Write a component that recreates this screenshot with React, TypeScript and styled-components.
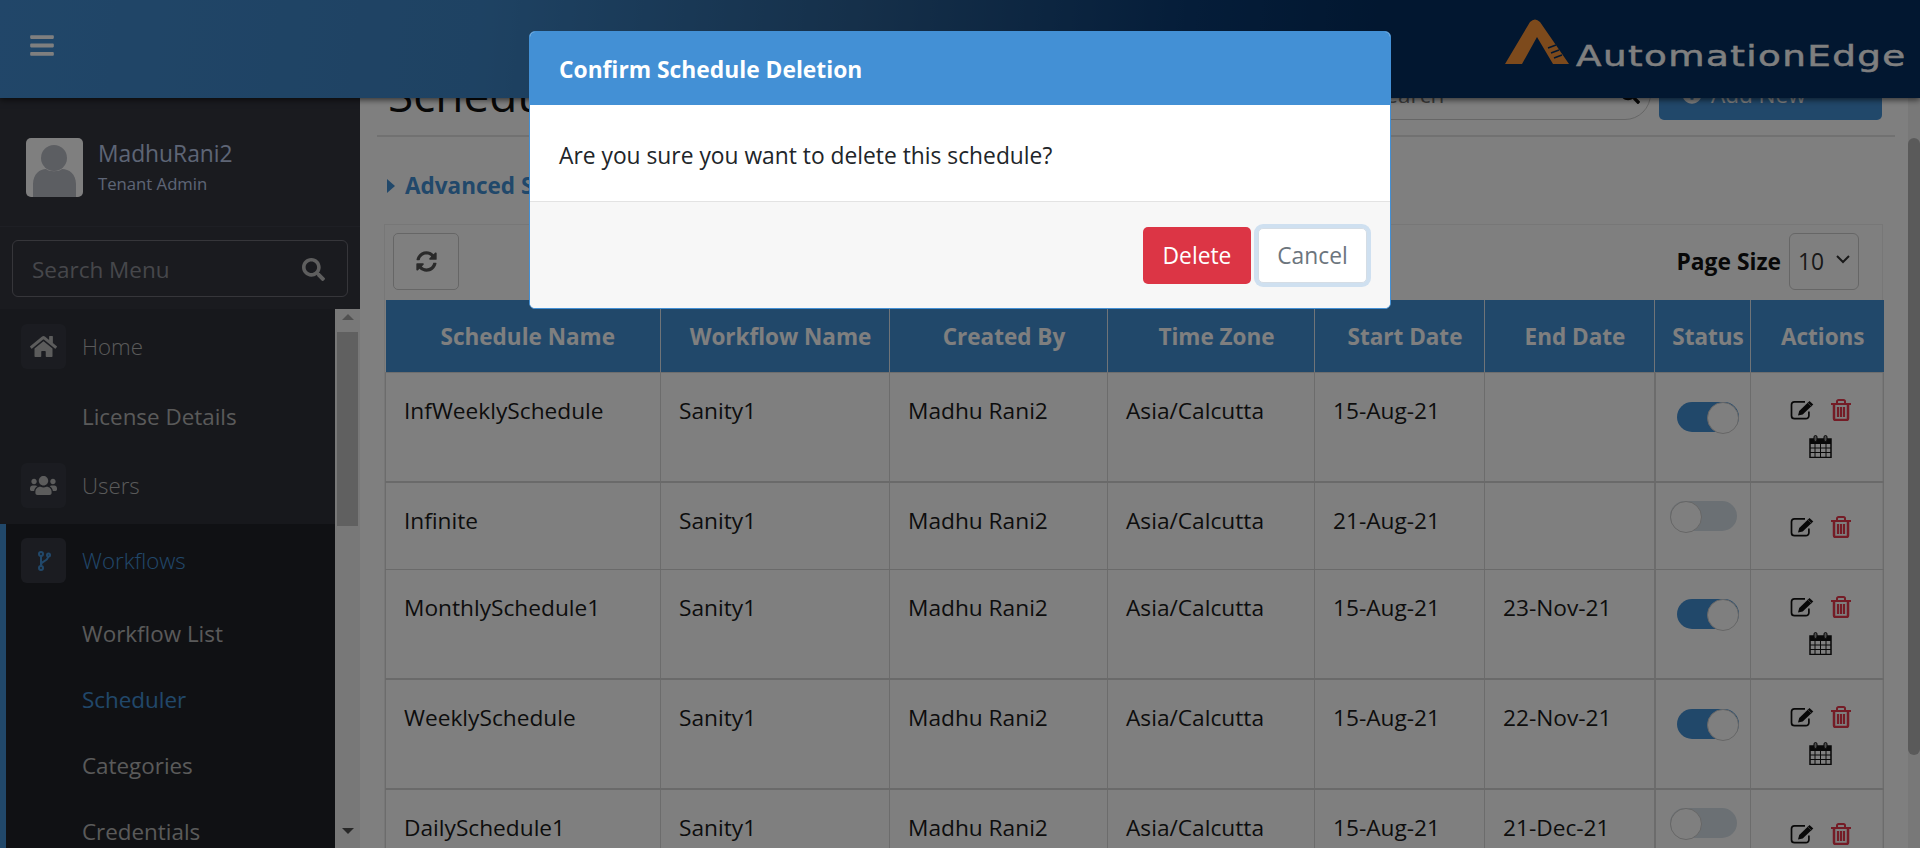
import React from "react";
import styled, { createGlobalStyle } from "styled-components";
import { FaBars, FaHome, FaUsers, FaSearch, FaSyncAlt, FaPlusCircle } from "react-icons/fa";

const Global = createGlobalStyle`
  html, body { margin: 0; padding: 0; height: 100%; overflow: hidden; background: #fff; }
  * { box-sizing: border-box; }
  body { font-family: "Open Sans", "Noto Sans", sans-serif; color: #212529; }
`;

const Page = styled.div`
  width: 1920px; height: 848px; display: flex; flex-direction: column; overflow: hidden; position: relative;
`;
const Header = styled.header`
  height: 98px; flex: none; display: flex; align-items: center; justify-content: space-between;
  padding: 0 19px 0 30px; position: relative; z-index: 2;
  background: linear-gradient(96deg, #428dd2 0%, #3d85c6 25%, #2a5f93 45%, #0a3a72 62%, #042e60 72%);
  box-shadow: 0 2px 6px rgba(0,0,0,.6);
`;
const Burger = styled.div`
  color: #fff; display: flex; margin-top: -7px; svg { width: 24px; height: 27px; display: block; }
`;
const Logo = styled.div`
  display: flex; align-items: flex-end; gap: 7px; margin-top: -16px;
`;
const LogoText = styled.span`
  display: inline-block; font-family: "DejaVu Sans", sans-serif; font-size: 29px; line-height: 32px; color: #fff; font-weight: 400;
  letter-spacing: 1.1px; margin: 0 68px -8px 0; -webkit-text-stroke: .5px #fff;
  transform: scaleX(1.285); transform-origin: left center;
`;
const Body = styled.div`
  flex: 1; display: flex; min-height: 0;
`;
const Sidebar = styled.aside`
  width: 360px; flex: none; background: #34363f; display: flex; flex-direction: column; overflow: hidden;
`;
const UserBox = styled.div`
  height: 129px; flex: none; border-bottom: 1px solid #3d3f49; display: flex; align-items: center; gap: 15px; padding: 10px 0 0 26px;
`;
const Avatar = styled.div`
  width: 57px; height: 59px; border-radius: 5px; background: #fff; overflow: hidden; flex: none;
  svg { display: block; width: 100%; height: 100%; }
`;
const UserText = styled.div`
  display: flex; flex-direction: column; gap: 5px;
`;
const UserName = styled.div`
  font-size: 22.8px; line-height: 28px; color: #bccbea;
`;
const UserRole = styled.div`
  font-size: 16.7px; line-height: 22px; color: #bccbea;
`;
const SearchMenu = styled.div`
  margin: 13px 12px 12px; height: 57px; flex: none; border: 1px solid #6c6c74; border-radius: 6px;
  display: flex; align-items: center; justify-content: space-between; padding: 2px 22px 0 19px;
  color: #8d8f96; font-size: 22.5px; svg { width: 23px; height: 23px; color: #bdbdbd; }
`;
const MenuWrap = styled.div`
  flex: 1; display: flex; min-height: 0;
`;
const Menu = styled.nav`
  width: 335px; flex: none; display: flex; flex-direction: column;
`;
const MenuGroup = styled.div`
  height: 215px; flex: none; padding-top: 15px; background: #2e3038;
`;
const Active = styled.div`
  flex: 1; border-left: 6px solid #4390d5; background: #212329; padding-top: 14px;
`;
const MenuItem = styled.div<{ $blue?: boolean }>`
  display: flex; align-items: center; gap: 16px; height: 45px; padding-left: 21px;
  font-size: 22.3px; font-weight: 300; color: ${p => (p.$blue ? "#4390d5" : "#b4b4b4")};
`;
const ActiveItem = styled(MenuItem)`
  padding-left: 15px; margin-bottom: 17px;
`;
const IconBox = styled.span<{ $blue?: boolean }>`
  width: 45px; height: 45px; border-radius: 6px; background: #363943; display: flex; align-items: center; justify-content: center;
  color: ${p => (p.$blue ? "#4390d5" : "#b8b8b8")}; flex: none; svg { width: 27px; height: 27px; }
`;
const BranchGlyph = styled.svg`
  && { width: 15px; height: 20px; }
`;
const SubItem = styled.div<{ $blue?: boolean; $h?: number }>`
  height: ${p => p.$h ?? 66}px; display: flex; align-items: center; padding-left: 76px; font-size: 22.4px;
  color: ${p => (p.$blue ? "#4390d5" : "#b4b4b4")};
`;
const PlainSub = styled(SubItem)`
  padding-left: 82px;
`;
const Track = styled.div`
  width: 25px; flex: none; background: #f1f1f1; display: flex; flex-direction: column; align-items: center; padding-top: 5px; position: relative;
`;
const Arrow = styled.span<{ $down?: boolean }>`
  width: 0; height: 0; border-left: 6px solid transparent; border-right: 6px solid transparent;
  ${p => (p.$down ? "border-top: 6px solid #505050;" : "border-bottom: 6px solid #a3a3a3;")}
`;
const Thumb = styled.div`
  width: 21px; height: 194px; background: #c1c1c1; margin: 12px 0 302px;
`;
const Main = styled.main`
  flex: 1; display: flex; min-width: 0;
`;
const Content = styled.div`
  width: 1548px; flex: none; padding: 0 13px 0 17px; overflow: hidden;
`;
const PageScroll = styled.div`
  width: 12px; flex: none; background: #f1f1f1; padding-top: 40px;
`;
const PageThumb = styled.div`
  height: 617px; background: #b4b4b4; border-radius: 6px;
`;
const TitleBar = styled.div`
  height: 39px; border-bottom: 2px solid #e3e3e3; display: flex; align-items: flex-end; overflow: hidden; padding: 0 13px 15px 11px; position: relative; width: 1518px;
`;
const Title = styled.h1`
  margin: 0 auto -5px 0; font-size: 46px; line-height: 62px; font-weight: 500; color: #111; white-space: nowrap;
`;
const TopSearch = styled.div`
  width: 400px; height: 52px; border: 1px solid #ccc; border-radius: 26px; display: flex; align-items: center; justify-content: space-between;
  padding: 0 10px 0 121px; font-size: 22.5px; color: #777; svg { width: 20px; height: 20px; color: #111; }
`;
const AddNew = styled.button`
  margin-left: 8px; width: 223px; height: 52px; border: 0; border-radius: 5px; background: #4390d5; color: #fff; font: 22.5px "Open Sans", sans-serif;
  display: flex; align-items: center; justify-content: flex-start; padding-left: 23px; gap: 9px; svg { width: 20px; height: 20px; }
`;
const Advanced = styled.div`
  height: 87px; display: flex; align-items: center; gap: 10px; padding: 10px 0 0 10px; font-size: 22.5px; font-weight: 700; color: #4390d5;
`;
const Caret = styled.span`
  width: 0; height: 0; border-top: 7px solid transparent; border-bottom: 7px solid transparent; border-left: 8px solid #4390d5;
`;
const TablePanel = styled.section`
  width: 1499px; margin-left: 7px; border: 1px solid #eee; border-bottom: 0;
`;
const Toolbar = styled.div`
  height: 75px; display: flex; align-items: flex-start; justify-content: space-between; padding: 8px 23px 0 8px;
`;
const RefreshBtn = styled.button`
  width: 66px; height: 57px; background: transparent; border: 1px solid #ccc; border-radius: 5px; color: #555;
  display: flex; align-items: center; justify-content: center; svg { width: 21px; height: 21px; }
`;
const PageSize = styled.div`
  display: flex; align-items: center; gap: 8px; font-size: 22.8px; font-weight: 700; color: #111;
`;
const SelectBox = styled.div`
  width: 70px; height: 57px; border: 1px solid #ccc; border-radius: 6px; display: flex; align-items: center; justify-content: space-between;
  padding: 0 7px 0 8px; font-size: 22.8px; font-weight: 400; color: #333; svg { width: 16px; height: 10px; margin-bottom: 6px; }
`;
const Table = styled.table`
  width: 1498px; border-collapse: collapse; table-layout: fixed; font-size: 22.7px;
`;
const Th = styled.th`
  height: 72px; background: #4390d5; color: #fff; font-weight: 700; font-size: 22.5px; text-align: center; padding: 2px 0 0 11px;
  border-left: 1px solid #e0e8f0; border-bottom: 1px solid #ddd; white-space: nowrap;
  &:first-child { border-left: 0; padding-left: 10px; }
`;
const Tr = styled.tr<{ $tall?: boolean }>`
  height: ${p => (p.$tall ? 110 : 87)}px;
  td { border-bottom: ${p => (p.$tall ? 2 : 1)}px solid #d4d4d4; }
`;
const Td = styled.td`
  padding: 23px 18px 0; vertical-align: top; border-left: 1px solid #d8d8d8; line-height: 30px; color: #1a1a1a; white-space: nowrap;
`;
const ToggleTd = styled.td<{ $on?: boolean }>`
  padding: 0 0 20px ${p => (p.$on ? 21 : 14)}px; vertical-align: middle; border-left: 2px solid #d8d8d8;
`;
const ActionTd = styled.td`
  padding: 3px 20px 0 27px; vertical-align: middle; border-left: 1px solid #d8d8d8; border-right: 1px solid #d8d8d8;
`;
const Toggle = styled.div<{ $on?: boolean }>`
  width: ${p => (p.$on ? 62 : 67)}px; height: 30px; border-radius: 15px; background: ${p => (p.$on ? "#4390d5" : "#d6e0e8")};
  display: flex; justify-content: ${p => (p.$on ? "flex-end" : "flex-start")};
  &::after { content: ""; width: 30px; height: 30px; border-radius: 50%; background: #fff; border: 1px solid #ccc; display: block; }
`;
const Actions = styled.div`
  display: flex; flex-wrap: wrap; justify-content: center; align-items: center; column-gap: 17px; row-gap: 14px;
`;
const Glyph = styled.svg`
  display: block; flex: none;
`;
const Backdrop = styled.div`
  position: absolute; inset: 0; background: rgba(0,0,0,.5); z-index: 5;
`;
const Modal = styled.div`
  position: absolute; left: 529px; top: 31px; width: 862px; height: 278px; z-index: 6; background: #fff; border: 1px solid #4390d5; border-radius: 6px;
  display: flex; flex-direction: column; overflow: hidden;
`;
const ModalHead = styled.div`
  height: 73px; flex: none; background: #4390d5; color: #fff; font-weight: 700; font-size: 22.8px; display: flex; align-items: center; padding: 2px 0 0 29px;
`;
const ModalBody = styled.div`
  flex: 1; display: flex; align-items: center; padding: 4px 29px 0; font-size: 22.8px; color: #212529;
`;
const ModalFoot = styled.div`
  height: 107px; flex: none; background: #f7f7f7; border-top: 1px solid #e3e3e3; display: flex; justify-content: flex-end; align-items: flex-start; padding: 25px 23px 0 0; gap: 7px;
`;
const DeleteBtn = styled.button`
  width: 108px; height: 57px; border: 0; border-radius: 5px; background: #dc3545; color: #fff; font: 22.8px "Open Sans", sans-serif;
`;
const CancelBtn = styled.button`
  width: 109px; height: 55px; margin-top: 1px; border: 1px solid #d5dde5; border-radius: 5px; background: #fff; color: #6c757d; font: 22.8px "Open Sans", sans-serif;
  box-shadow: 0 0 0 4px #cfe0f0;
`;

const Edit = () => (
  <Glyph width="24" height="20" viewBox="0 0 24 20">
    <path d="M15 1.800H4.500A3 3 0 0 0 1.500 4.800v10.900a3 3 0 0 0 3 3h11.400a3 3 0 0 0 3-3V11.500" fill="none" stroke="#111" strokeWidth="1.700" />
    <path d="M8 15.500l1.200-4.600L19.500 1l3.800 3.600L12.700 14.600z" fill="#111" />
    <path d="M17.800 2.900l3.700 3.500" stroke="#888" strokeWidth=".8" />
  </Glyph>
);
const Trash = () => (
  <Glyph width="20" height="22" viewBox="0 0 20 22" fill="none" stroke="#e8384c">
    <path d="M0 5h20" strokeWidth="2" />
    <path d="M6 5V2.500C6 1.600 6.700 1 7.500 1h5c.8 0 1.500.6 1.500 1.500V5" strokeWidth="2" />
    <path d="M3 5v14.500c0 1 .7 1.500 1.500 1.500h11c.8 0 1.500-.5 1.500-1.500V5" strokeWidth="2.500" />
    <path d="M7 8v10M10 8v10M13 8v10" strokeWidth="2.200" />
  </Glyph>
);
const Calendar = () => (
  <Glyph width="23" height="23" viewBox="0 0 23 23">
    <path d="M1 4h21v18.500H1z" fill="none" stroke="#111" strokeWidth="1.500" />
    <rect x="1" y="4" width="21" height="5" fill="#111" />
    <rect x="5" y="0.500" width="3" height="6" rx="1.500" fill="#999" stroke="#111" />
    <rect x="15" y="0.500" width="3" height="6" rx="1.500" fill="#999" stroke="#111" />
    <path d="M1 13h21M1 17.500h21M6 9v13M11.500 9v13M17 9v13" stroke="#111" strokeWidth="1" />
  </Glyph>
);
const Branch = () => (
  <BranchGlyph viewBox="0 0 15 20" fill="none" stroke="#4390d5" strokeWidth="2">
    <circle cx="5" cy="3" r="2" />
    <circle cx="5" cy="17" r="2" />
    <circle cx="12.500" cy="4" r="1.500" />
    <path d="M5 5v10M5 14c0-4 6-3 7.500-8.500" />
  </BranchGlyph>
);

const rows = [
  { n: "InfWeeklySchedule", s: "15-Aug-21", e: "", on: true },
  { n: "Infinite", s: "21-Aug-21", e: "", on: false },
  { n: "MonthlySchedule1", s: "15-Aug-21", e: "23-Nov-21", on: true },
  { n: "WeeklySchedule", s: "15-Aug-21", e: "22-Nov-21", on: true },
  { n: "DailySchedule1", s: "15-Aug-21", e: "21-Dec-21", on: false },
];
const cols = [275, 229, 218, 207, 170, 170, 96, 133];
const heads = ["Schedule Name", "Workflow Name", "Created By", "Time Zone", "Start Date", "End Date", "Status", "Actions"];

export default function App() {
  return (
    <Page>
      <Global />
      <Header>
        <Burger><FaBars /></Burger>
        <Logo>
          <svg width="64" height="46" viewBox="0 0 64 46">
            <path d="M0 46L25 4Q30-1 35 4L64 46H48L32 19L17 46Z" fill="#fb9438" />
            <path d="M43 30l8-3M46 35l8-3M49 40l8-3" stroke="#042e60" strokeWidth="1.500" />
          </svg>
          <LogoText>AutomationEdge</LogoText>
        </Logo>
      </Header>
      <Body>
        <Sidebar>
          <UserBox>
            <Avatar>
              <svg viewBox="0 0 57 59">
                <circle cx="28" cy="20" r="13" fill="#b9bcc4" />
                <path d="M7 59V46C7 36 14 31 20 31c3 3 13 3 16 0 7 0 14 5 14 15v13Z" fill="#b9bcc4" />
              </svg>
            </Avatar>
            <UserText>
              <UserName>MadhuRani2</UserName>
              <UserRole>Tenant Admin</UserRole>
            </UserText>
          </UserBox>
          <SearchMenu>Search Menu<FaSearch /></SearchMenu>
          <MenuWrap>
            <Menu>
              <MenuGroup>
                <MenuItem><IconBox><FaHome /></IconBox>Home</MenuItem>
                <PlainSub $h={94}>License Details</PlainSub>
                <MenuItem><IconBox><FaUsers /></IconBox>Users</MenuItem>
              </MenuGroup>
              <Active>
                <ActiveItem $blue><IconBox $blue><Branch /></IconBox>Workflows</ActiveItem>
                <SubItem>Workflow List</SubItem>
                <SubItem $blue>Scheduler</SubItem>
                <SubItem>Categories</SubItem>
                <SubItem>Credentials</SubItem>
              </Active>
            </Menu>
            <Track>
              <Arrow />
              <Thumb />
              <Arrow $down />
            </Track>
          </MenuWrap>
        </Sidebar>
        <Main>
          <Content>
            <TitleBar>
              <Title>Scheduler</Title>
              <TopSearch>Search<FaSearch /></TopSearch>
              <AddNew><FaPlusCircle />Add New</AddNew>
            </TitleBar>
            <Advanced><Caret />Advanced Search</Advanced>
            <TablePanel>
              <Toolbar>
                <RefreshBtn><FaSyncAlt /></RefreshBtn>
                <PageSize>
                  Page Size
                  <SelectBox>
                    10
                    <svg viewBox="0 0 16 10" fill="none" stroke="#333" strokeWidth="2"><path d="M2 2l6 6 6-6" /></svg>
                  </SelectBox>
                </PageSize>
              </Toolbar>
              <Table>
                <colgroup>
                  {cols.map((w, i) => <col key={i} width={w} />)}
                </colgroup>
                <thead>
                  <tr>{heads.map(h => <Th key={h}>{h}</Th>)}</tr>
                </thead>
                <tbody>
                  {rows.map(r => (
                    <Tr key={r.n} $tall={r.on}>
                      <Td>{r.n}</Td>
                      <Td>Sanity1</Td>
                      <Td>Madhu Rani2</Td>
                      <Td>Asia/Calcutta</Td>
                      <Td>{r.s}</Td>
                      <Td>{r.e}</Td>
                      <ToggleTd $on={r.on}><Toggle $on={r.on} /></ToggleTd>
                      <ActionTd>
                        <Actions>
                          <Edit />
                          <Trash />
                          {r.on && <Calendar />}
                        </Actions>
                      </ActionTd>
                    </Tr>
                  ))}
                </tbody>
              </Table>
            </TablePanel>
          </Content>
          <PageScroll><PageThumb /></PageScroll>
        </Main>
      </Body>
      <Backdrop />
      <Modal>
        <ModalHead>Confirm Schedule Deletion</ModalHead>
        <ModalBody>Are you sure you want to delete this schedule?</ModalBody>
        <ModalFoot>
          <DeleteBtn>Delete</DeleteBtn>
          <CancelBtn>Cancel</CancelBtn>
        </ModalFoot>
      </Modal>
    </Page>
  );
}
